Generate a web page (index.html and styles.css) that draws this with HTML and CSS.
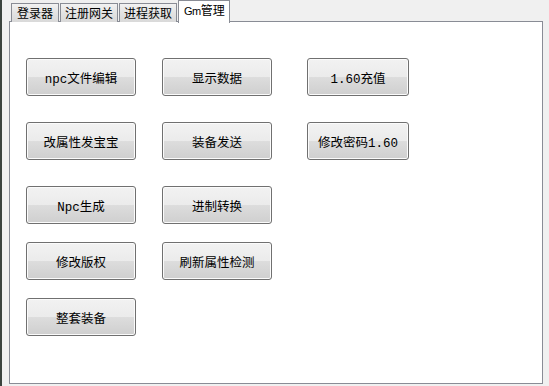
FILE: index.html
```html
<!DOCTYPE html>
<html lang="zh-CN">
<head>
    <meta charset="UTF-8">
    <title>Gm管理</title>
    <link rel="stylesheet" href="styles.css">
</head>
<body>
    <!-- Tab strip -->
    <div class="tabs">
        <div class="tab first">登录器</div>
        <div class="tab">注册网关</div>
        <div class="tab">进程获取</div>
        <div class="tab active"><span class="tab-latin">Gm</span>管理</div>
    </div>

    <!-- Gm page -->
    <div class="panel">
        <div class="button-grid">
            <button class="btn">npc文件编辑</button>
            <button class="btn">显示数据</button>
            <button class="btn btn-small">1.60充值</button>

            <button class="btn">改属性发宝宝</button>
            <button class="btn">装备发送</button>
            <button class="btn btn-small">修改密码1.60</button>

            <button class="btn">Npc生成</button>
            <button class="btn">进制转换</button>
            <div></div>

            <button class="btn">修改版权</button>
            <button class="btn">刷新属性检测</button>
            <div></div>

            <button class="btn">整套装备</button>
        </div>
    </div>
</body>
</html>
```

FILE: styles.css
```css
html, body {
    margin: 0;
    padding: 0;
}

body {
    width: 549px;
    height: 386px;
    box-sizing: border-box;
    background-color: #f0f0f0;
    border-left: 2px solid #3b433e;
    font-family: "Noto Sans CJK SC", "Liberation Sans", sans-serif;
    font-size: 12px;
    color: #000;
    overflow: hidden;
}

.tabs {
    display: flex;
    align-items: flex-end;
    height: 22px;
    margin-left: 9px;
    position: relative;
    z-index: 1;
}

.tab {
    height: 18px;
    line-height: 17px;
    padding: 0 4px;
    margin-right: 1px;
    border: 1px solid #898c95;
    border-bottom: none;
    background: linear-gradient(#f2f2f2, #e3e3e3 50%, #d9d9d9);
}

.tab.first {
    padding: 0 5px;
}

.tab.active {
    height: 22px;
    line-height: 18px;
    margin-bottom: -1px;
    padding: 0 4px 0 5px;
    background: #fff;
}

.tab-latin {
    font-family: "Liberation Sans", sans-serif;
    font-size: 11px;
    letter-spacing: -0.5px;
}

.panel {
    margin-top: -1px;
    margin-left: 7px;
    width: 534px;
    height: 363px;
    box-sizing: border-box;
    border: 1px solid #898c95;
    background-color: #fff;
    padding: 36px 0 0 16px;
}

.button-grid {
    display: grid;
    grid-template-columns: 136px 145px 102px;
    grid-template-rows: 64px 64px 56px 56px 38px;
    align-items: start;
}

.btn {
    width: 110px;
    height: 38px;
    padding: 0;
    border: 1px solid #707070;
    border-radius: 3px;
    background: linear-gradient(#f2f2f2 0%, #ebebeb 50%, #dddddd 50%, #cfcfcf 100%);
    box-shadow: inset 0 0 0 1px #fbfbfb;
    font-family: "Liberation Mono", "Noto Sans CJK SC", monospace;
    font-size: 12.5px;
    color: #000;
}

.btn-small {
    width: 102px;
}
```
